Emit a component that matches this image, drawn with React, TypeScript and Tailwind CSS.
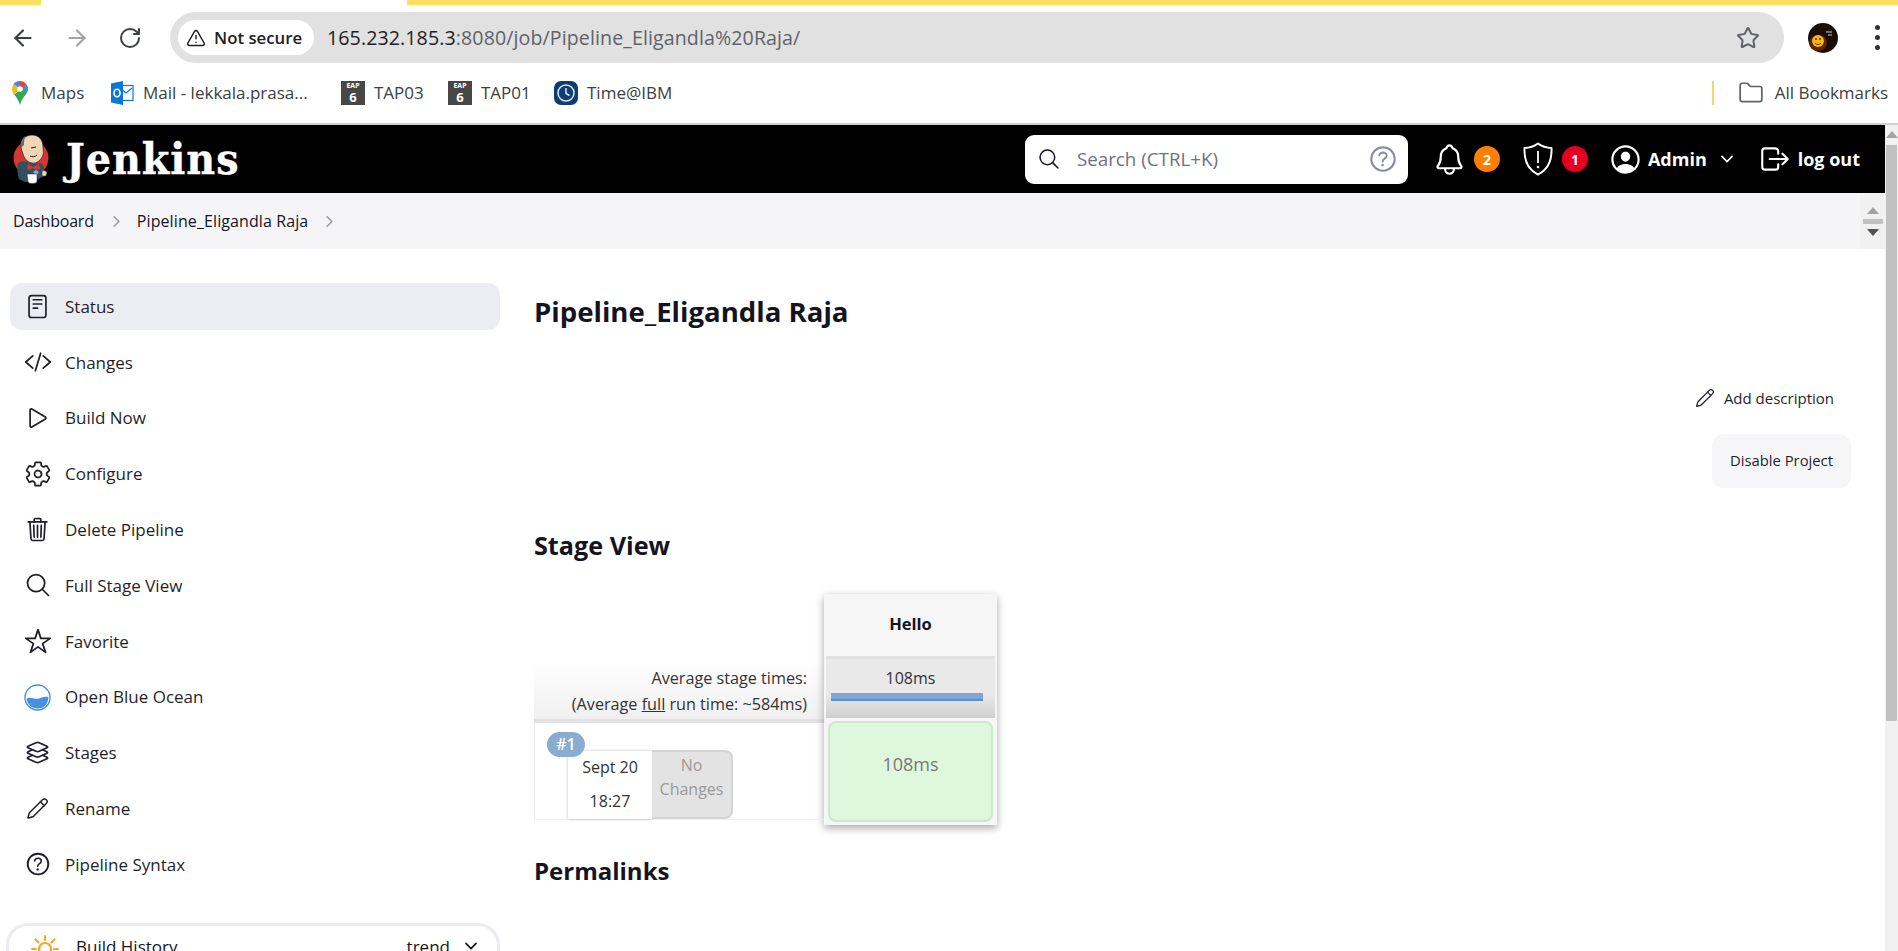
import React from 'react';
import { ArrowLeft, ArrowRight, RotateCw, Star, TriangleAlert, Folder, Pencil } from 'lucide-react';
import {
  IoReaderOutline, IoCodeSlashOutline, IoPlayOutline, IoSettingsOutline, IoTrashOutline, IoSearchOutline,
  IoStarOutline, IoLayersOutline, IoHelpCircleOutline, IoNotificationsOutline,
  IoPersonCircleOutline, IoLogOutOutline, IoChevronDownOutline, IoChevronForwardOutline,
} from 'react-icons/io5';

const Sans = '[font-family:"Open_Sans","Noto_Sans",sans-serif]';

function Ocean() {
  return (
    <svg width="27" height="27" viewBox="0 0 27 27">
      <circle cx="13.5" cy="13.5" r="12.5" fill="#fff" stroke="#4a90e2" strokeWidth="1.4" />
      <path d="M2.6 14.5c4-2 7 .8 11 .3 3.500-.4 6-2.500 10.800-1.800 0 7-4.800 11.500-10.900 11.500S3.200 20.500 2.600 14.500z" fill="#4a90e2" />
    </svg>
  );
}

function JenkinsLogo() {
  return (
    <svg width="37" height="49" viewBox="0 0 37 49" className="shrink-0">
      <circle cx="18" cy="23" r="17.500" fill="#d33833" />
      <path d="M8 11C8 4 13 0 19 0c7 0 11 5 11 12 0 3 1 5 0 8-2 5-6 9-11 8-5-1-8-5-9-9-1-3-2-5-2-8z" fill="#f0d6b7" stroke="#231f20" strokeWidth=".7" />
      <path d="M8 12C7 6 10 2 13 1c-2 3-2 6-2 9-1 1-2 2-3 2z" fill="#6d6b6d" />
      <path d="M18 13l5-1M24 20c-2 2-5 2-7 1" stroke="#231f20" strokeWidth="1" fill="none" />
      <path d="M5 28c3-2 6-2 9-1l5 2 8-1c2 0 4 3 4 6l1 7-5 2-4 3-11 1-6-3c-2-5-2-11-1-16z" fill="#335061" />
      <path d="M15 29l5 3 6-3 1 5-4 1-3-2-3 2-3-1z" fill="#d33833" />
      <path d="M20 37l3-2 3 2-3 4z" fill="#81b0c4" />
      <path d="M14 39h10v8c-2 2-8 2-9 0z" fill="#fff" stroke="#231f20" strokeWidth=".5" />
      <path d="M29 36c2-1 5 0 5 2l-1 3-4 0z" fill="#f0d6b7" stroke="#231f20" strokeWidth=".5" />
    </svg>
  );
}

function MapsPin() {
  return (
    <svg width="16" height="24" viewBox="0 0 16 24">
      <path d="M8 0a8 8 0 0 1 6.500 3.400L8 11z" fill="#ea4335" />
      <path d="M1.500 3.300A8 8 0 0 1 8 0v8z" fill="#4285f4" />
      <path d="M1.500 3.300L8 8l-5.800 5.400C.6 11.500 0 9.500 0 8c0-1.700.5-3.300 1.500-4.700z" fill="#fbbc04" />
      <path d="M14.500 3.400C15.500 4.700 16 6.300 16 8c0 2-.9 4-2.300 5.700L8 8z" fill="#4285f4" />
      <path d="M2.200 13.400L13.700 5 13.800 13.500C11 17 9 20 8 24 7 20 5 17 2.200 13.400z" fill="#34a853" />
      <circle cx="8" cy="8" r="2.800" fill="#fff" />
    </svg>
  );
}

function Outlook() {
  return (
    <svg width="24" height="24" viewBox="0 0 24 24">
      <rect x="9" y="4.500" width="14" height="15" fill="#fff" stroke="#0a78d4" strokeWidth="1.200" />
      <path d="M10 7l6 5 6-5" stroke="#0a78d4" strokeWidth="1.200" fill="none" />
      <path d="M1 2.500L13 0v24L1 21.500z" fill="#0a78d4" />
      <ellipse cx="7" cy="12" rx="3" ry="3.800" fill="none" stroke="#fff" strokeWidth="1.600" />
    </svg>
  );
}

function Eap() {
  return (
    <div className={`flex h-[24px] w-[24px] flex-col items-center justify-start bg-[#474747] text-white ${Sans}`}>
      <span className="text-[7px] font-bold leading-[10px]">EAP</span>
      <span className="text-[13px] font-bold leading-[13px]">6</span>
    </div>
  );
}

function TimeIcon() {
  return (
    <svg width="24" height="24" viewBox="0 0 24 24">
      <rect width="24" height="24" rx="7" fill="#0f3c71" />
      <circle cx="12" cy="12" r="8" fill="none" stroke="#dbe7f3" strokeWidth="1.500" />
      <path d="M12 7v5.500l3.500 2" fill="none" stroke="#dbe7f3" strokeWidth="1.500" />
    </svg>
  );
}

function Avatar() {
  return (
    <svg width="30" height="30" viewBox="0 0 30 30">
      <circle cx="15" cy="15" r="15" fill="#1a0d09" />
      <ellipse cx="10" cy="20" rx="9" ry="8" fill="#5e2405" />
      <circle cx="10" cy="18" r="6" fill="#f4b710" />
      <path d="M7 20c2 2 4 2 6 0" stroke="#5e2405" strokeWidth="1" fill="none" />
      <circle cx="8" cy="16" r="1" fill="#5e2405" />
      <circle cx="12" cy="16" r="1" fill="#5e2405" />
      <path d="M18 9h6M20 12h4" stroke="#c9c9c9" strokeWidth="1" />
    </svg>
  );
}

function Shield() {
  return (
    <svg width="32" height="34" viewBox="0 0 32 34" fill="none" stroke="#fff" strokeWidth="2">
      <path d="M16 1.500c4 3 8 4.300 13.500 4.500.5 12-3 21.500-13.500 26.500C5.500 27.500 2 18 2.500 6 8 5.800 12 4.500 16 1.500z" strokeLinejoin="round" />
      <path d="M16 9v12" strokeWidth="1.800" />
      <circle cx="16" cy="25" r=".9" fill="#fff" strokeWidth="1" />
    </svg>
  );
}

function Sun() {
  return (
    <svg width="30" height="30" viewBox="0 0 30 30" fill="none" stroke="#f9a825" strokeWidth="2.200" strokeLinecap="round">
      <circle cx="15" cy="15" r="6" />
      <path d="M15 2v4M5.500 5.500l3 3M24.500 5.500l-3 3M2 15h4M28 15h-4" />
    </svg>
  );
}

const items: [string, React.ReactNode][] = [
  ['Status', <IoReaderOutline size={27} />],
  ['Changes', <IoCodeSlashOutline size={28} />],
  ['Build Now', <IoPlayOutline size={28} />],
  ['Configure', <IoSettingsOutline size={28} />],
  ['Delete Pipeline', <IoTrashOutline size={27} />],
  ['Full Stage View', <IoSearchOutline size={28} />],
  ['Favorite', <IoStarOutline size={28} />],
  ['Open Blue Ocean', <Ocean />],
  ['Stages', <IoLayersOutline size={27} />],
  ['Rename', <Pencil size={23} strokeWidth={1.500} />],
  ['Pipeline Syntax', <IoHelpCircleOutline size={30} />],
];

function Bookmark({ icon, label, className }: { icon: React.ReactNode; label: string; className: string }) {
  return (
    <div className={`flex items-center ${className}`}>
      {icon}
      <span className="text-[17px] text-[#3c4043]">{label}</span>
    </div>
  );
}

export default function App() {
  return (
    <div className={`flex h-[951px] w-[1898px] flex-col overflow-hidden bg-white text-[#14141f] ${Sans}`}>
      {/* browser chrome */}
      <div className="flex h-[5px] shrink-0">
        <div className="w-[41px] bg-[#ffdf5d]" />
        <div className="w-[366px] bg-white" />
        <div className="flex-1 bg-[#ffdf5d]" />
      </div>
      <div className="flex h-[65px] shrink-0 items-center">
        <div className="flex w-[170px] shrink-0 items-center gap-[28px] pl-[10px]">
          <ArrowLeft size={26} color="#3c4043" strokeWidth={2} />
          <ArrowRight size={26} color="#a0a3a8" strokeWidth={2} />
          <RotateCw size={24} color="#3c4043" strokeWidth={2} />
        </div>
        <div className="flex h-[51px] w-[1614px] shrink-0 items-center rounded-full bg-[#e1e1e1] pl-[8px] pr-[24px]">
          <div className="flex h-[35px] w-[136px] items-center gap-[8px] rounded-full bg-white pl-[8px]">
            <TriangleAlert size={20} color="#202124" strokeWidth={1.8} />
            <span className="text-[16.800px] font-semibold text-[#202124]">Not secure</span>
          </div>
          <div className="ml-[13px] flex-1 text-[19.600px] tracking-[0.1px] text-[#5f6368]">
            <span className="text-[#202124]">165.232.185.3</span>:8080/job/Pipeline_Eligandla%20Raja/
          </div>
          <Star size={24} color="#5f6368" strokeWidth={2} />
        </div>
        <div className="ml-[24px] shrink-0"><Avatar /></div>
        <div className="ml-[37px] flex shrink-0 flex-col gap-[5px]">
          <span className="h-[5px] w-[5px] rounded-full bg-[#303134]" />
          <span className="h-[5px] w-[5px] rounded-full bg-[#303134]" />
          <span className="h-[5px] w-[5px] rounded-full bg-[#303134]" />
        </div>
      </div>
      <div className="flex h-[53px] shrink-0 items-center pb-[8px] pl-[12px] pr-[10px]">
        <Bookmark icon={<MapsPin />} label="Maps" className="w-[98px] gap-[13px]" />
        <Bookmark icon={<Outlook />} label="Mail - lekkala.prasa..." className="w-[231px] gap-[9px]" />
        <Bookmark icon={<Eap />} label="TAP03" className="w-[107px] gap-[9px]" />
        <Bookmark icon={<Eap />} label="TAP01" className="w-[106px] gap-[9px]" />
        <Bookmark icon={<TimeIcon />} label="Time@IBM" className="gap-[9px]" />
        <div className="ml-auto h-[24px] w-[2px] bg-[#f5d76e]" />
        <Folder size={26} color="#5f6368" strokeWidth={1.6} className="ml-[24px]" />
        <span className="ml-[11px] text-[17px] text-[#3c4043]">All Bookmarks</span>
      </div>
      <div className="h-[2px] shrink-0 bg-[#cfcfcf]" />

      {/* page + window scrollbar */}
      <div className="flex min-h-0 flex-1">
        <div className="flex min-w-0 flex-1 flex-col">
          <header className="flex h-[68px] shrink-0 items-center bg-black pl-[13px] text-white">
            <JenkinsLogo />
            <span className="ml-[16px] w-[176px] origin-left text-[43px] font-bold leading-none tracking-[1px] [-webkit-text-stroke:0.4px_white] [font-family:'DejaVu_Serif','Liberation_Serif',serif] [transform:scaleX(0.925)]">Jenkins</span>
            <div className="ml-auto flex h-[49px] w-[383px] items-center rounded-[9px] bg-white pb-[1px] pl-[12px] pr-[8px] text-[#14141f]">
              <IoSearchOutline size={24} />
              <span className="ml-[16px] flex-1 pt-[2px] text-[18.800px] text-[#71717f]">Search (CTRL+K)</span>
              <IoHelpCircleOutline size={34} color="#8a8aa6" />
            </div>
            <div className="ml-[24px] flex items-center">
              <IoNotificationsOutline size={35} />
              <span className="ml-[7px] flex h-[26px] w-[26px] items-center justify-center rounded-full bg-[#ff8000] text-[14px] font-bold">2</span>
            </div>
            <div className="ml-[22px] flex items-center">
              <Shield />
              <span className="ml-[8px] flex h-[26px] w-[26px] items-center justify-center rounded-full bg-[#e6001f] text-[14px] font-bold">1</span>
            </div>
            <IoPersonCircleOutline size={35} className="ml-[20px]" />
            <span className="ml-[5px] text-[18px] font-bold">Admin</span>
            <IoChevronDownOutline size={18} className="ml-[11px]" />
            <IoLogOutOutline size={34} className="ml-[22px]" />
            <span className="ml-[6px] mr-[25px] text-[18px] font-bold">log out</span>
          </header>

          <nav className="flex h-[56px] shrink-0 items-center bg-[#f5f5f8] pl-[13px] text-[16px] text-[#14141f]">
            <span className="tracking-[-0.2px]">Dashboard</span>
            <IoChevronForwardOutline size={17} color="#9a9aa8" className="ml-[14px]" />
            <span className="ml-[12px] tracking-[0.1px]">Pipeline_Eligandla Raja</span>
            <IoChevronForwardOutline size={17} color="#9a9aa8" className="ml-[13px]" />
            <div className="ml-auto flex h-full w-[25px] flex-col items-center justify-center gap-[5px] bg-[#f1f1f1]">
              <span className="h-0 w-0 border-x-[6px] border-b-[7px] border-x-transparent border-b-[#a3a3a3]" />
              <span className="h-[5px] w-[20px] bg-[#c1c1c1]" />
              <span className="h-0 w-0 border-x-[6px] border-t-[7px] border-x-transparent border-t-[#505050]" />
            </div>
          </nav>

          <div className="flex min-h-0 flex-1 overflow-hidden">
            <aside className="flex w-[534px] shrink-0 flex-col pl-[10px] pr-[34px] pt-[34px]">
              <div className="flex flex-col gap-[8.800px]">
                {items.map(([label, icon], i) => (
                  <div key={label} className={`flex h-[47px] items-center rounded-[12px] ${i === 0 ? 'bg-[#ecedf2]' : ''}`}>
                    <span className="flex w-[55px] shrink-0 justify-center text-[#1f1f2b]">{icon}</span>
                    <span className="text-[17px] text-[#1f1f2b]">{label}</span>
                  </div>
                ))}
              </div>
              <div className="-ml-[4px] mt-[35px] flex h-[60px] w-[494px] shrink-0 items-start rounded-t-[22px] border-[3px] border-b-0 border-[#ebebf2] pl-[21px] pr-[17px] pt-[8px]">
                <Sun />
                <span className="ml-[16px] text-[17px]">Build History</span>
                <span className="ml-auto text-[17px]">trend</span>
                <IoChevronDownOutline size={18} className="ml-[12px] mt-[3px]" />
              </div>
            </aside>

            <main className="min-w-0 flex-1 pr-[34px]">
              <h1 className="mt-[43px] text-[27.600px] font-bold leading-[38px]">Pipeline_Eligandla Raja</h1>
              <div className="mt-[57px] flex justify-end pr-[17px]">
                <div className="flex items-center gap-[9px] text-[15px] font-medium text-[#1f1f2b]">
                  <Pencil size={20} strokeWidth={1.500} />
                  <span>Add description</span>
                </div>
              </div>
              <div className="mt-[24px] flex justify-end">
                <div className="flex h-[54px] w-[139px] items-center justify-center rounded-[12px] bg-[#f6f6f8] text-[14.800px] font-medium text-[#1f1f2b]">Disable Project</div>
              </div>
              <h2 className="mt-[40px] text-[25.200px] font-bold leading-[34px]">Stage View</h2>

              <div className="mt-[32px] flex w-[464px] items-start">
                <div className="mt-[66px] flex h-[160px] w-[290px] shrink-0 flex-col">
                  <div className="flex h-[60px] flex-col items-end bg-gradient-to-b from-white to-[#f0f0f0] pr-[17px] text-[16.200px] leading-[26px] text-[#333]">
                    <span className="mt-[5px]">Average stage times:</span>
                    <span>(Average <span className="underline">full</span> run time: ~584ms)</span>
                  </div>
                  <div className="h-[4px] bg-[#e2e2e2]" />
                  <div className="relative flex flex-1 border-b border-l border-[#eeeeee]">
                    <span className="absolute left-[12px] top-[9px] z-10 flex h-[25px] w-[38px] items-center justify-center rounded-full bg-[#8bacd1] text-[16px] font-semibold text-white">#1</span>
                    <div className="ml-[33px] mt-[28px] flex h-[68px] w-[84px] shrink-0 flex-col items-center bg-white text-[16px] leading-[34px] text-[#333] shadow-[0_0_3px_rgba(0,0,0,0.25)]">
                      <span className="-mt-[1px]">Sept 20</span>
                      <span>18:27</span>
                    </div>
                    <div className="mt-[27px] flex h-[69px] w-[81px] shrink-0 flex-col items-center rounded-r-[8px] border-2 border-l-0 border-[#d4d4d4] bg-[#e3e3e3] pt-[1px] text-[16px] leading-[24px] text-[#999]">
                      <span>No</span>
                      <span>Changes</span>
                    </div>
                  </div>
                </div>
                <div className="flex h-[231px] w-[173px] shrink-0 flex-col bg-[#f6f6f6] px-[2px] pb-[3px] shadow-[0_3px_8px_rgba(0,0,0,0.35)]">
                  <div className="flex h-[62px] shrink-0 items-center justify-center text-[16.500px] font-bold text-[#14141f]">Hello</div>
                  <div className="flex h-[62px] shrink-0 flex-col border-t-[3px] border-[#e0e0e0] bg-gradient-to-b from-[#e9e9e9] from-60% to-[#cfcfcf] px-[5px]">
                    <span className="text-center text-[16px] leading-[38px] text-[#333]">108ms</span>
                    <div className="-mt-[4px] h-[8px] w-[152px] border-b-2 border-[#5b8fd6] bg-[#80a6d6]" />
                  </div>
                  <div className="mx-[2px] mt-[3px] flex flex-1 flex-col items-center rounded-[8px] border-2 border-[#cfe6cf] bg-[#dff7dc] pt-[27px] text-[18px] leading-[28px] text-[#777]">108ms</div>
                </div>
              </div>
              <h2 className="mt-[29px] text-[24px] font-bold leading-[34px]">Permalinks</h2>
            </main>
          </div>
        </div>

        {/* window scrollbar */}
        <div className="flex w-[13px] shrink-0 flex-col items-center bg-[#f1f1f1]">
          <span className="mt-[6px] h-0 w-0 border-x-[6px] border-b-[7px] border-x-transparent border-b-[#a3a3a3]" />
          <div className="mt-[7px] h-[576px] w-[11px] bg-[#c1c1c1]" />
        </div>
      </div>
    </div>
  );
}
